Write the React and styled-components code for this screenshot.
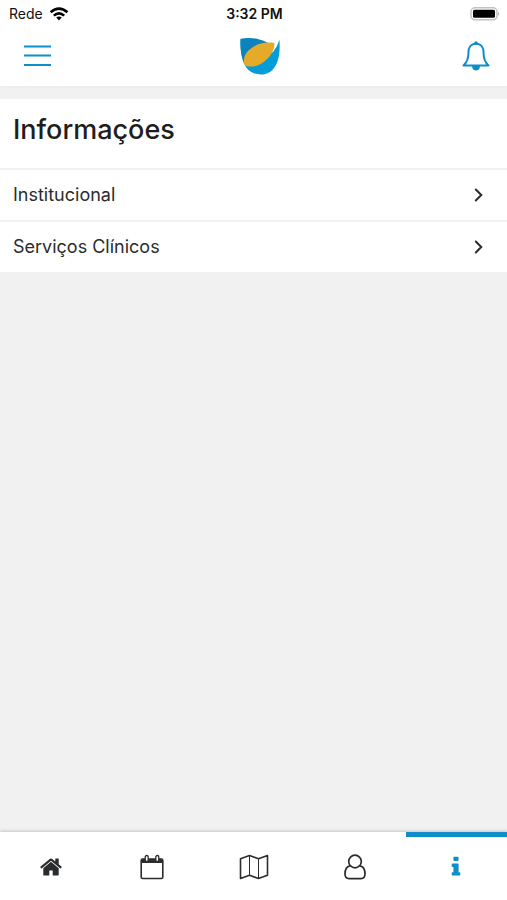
import { useState } from "react";
import styled, { createGlobalStyle } from "styled-components";

const GlobalStyle = createGlobalStyle`
  * {
    box-sizing: border-box;
  }

  body {
    margin: 0;
    background: #f1f1f1;
    color: #2b2c2e;
    font-family: Inter, "Liberation Sans", sans-serif;
  }

  button {
    padding: 0;
    border: 0;
    background: none;
    color: inherit;
    font: inherit;
    cursor: pointer;
  }

  svg {
    display: block;
  }
`;

const Screen = styled.div`
  min-height: 100vh;
  display: flex;
  flex-direction: column;
`;

const Header = styled.header`
  background: #fff;
  box-shadow: 0 1px 2px rgba(0, 0, 0, 0.04);
`;

const Bar = styled.div`
  display: grid;
  grid-template-columns: 1fr auto 1fr;
  align-items: center;
`;

const StatusBar = styled(Bar)`
  height: 28px;
  padding: 0 7px 0 9px;
  color: #111;
  font-size: 14px;
  line-height: 16px;
`;

const Toolbar = styled(Bar)`
  height: 58px;
  padding: 0 17px 2px 24px;
  color: #0f8dcb;
`;

const Network = styled.div`
  display: flex;
  align-items: center;
  gap: 6px;
`;

const Clock = styled.time`
  font-weight: 600;
`;

const End = styled.div`
  justify-self: end;
`;

const IconButton = styled.button`
  justify-self: ${(props) => (props.$end ? "end" : "start")};
`;

const Logo = styled.a`
  padding-left: 5px;
`;

const Content = styled.main`
  flex: 1;
  padding-top: 13px;
`;

const Title = styled.h1`
  margin: 0;
  padding: 15px 13px 22px;
  background: #fff;
  color: #1d1e20;
  font-size: 27px;
  font-weight: 500;
  line-height: 32px;
`;

const List = styled.ul`
  margin: 0;
  padding: 0;
  list-style: none;
`;

const Row = styled.button`
  width: 100%;
  padding: 13px 23px 13px 13px;
  display: flex;
  align-items: center;
  justify-content: space-between;
  border-top: 2px solid #f0f2f3;
  background: #fff;
  font-size: 18px;
  line-height: 24px;
  text-align: left;
`;

const TabBar = styled.nav`
  height: 68px;
  display: flex;
  background: #fff;
  box-shadow: 0 -1px 3px rgba(0, 0, 0, 0.18);
`;

const Tab = styled.button`
  flex: 1;
  padding-bottom: 4px;
  display: flex;
  align-items: center;
  justify-content: center;
  border-top: 5px solid ${(props) => (props.$active ? "#0f8dcb" : "transparent")};
  color: ${(props) => (props.$active ? "#0f8dcb" : "#2b2c2e")};
`;

const WifiIcon = () => (
  <svg width="20" height="14" viewBox="0 0 20 14" fill="none" stroke="#000" strokeWidth="2.6">
    <path d="M1.6 5.2Q10-2 18.4 5.2" />
    <path d="M4.8 8.6Q10 4 15.2 8.6" />
    <path d="M7.2 10.6Q10 8.4 12.8 10.6L10 13.6z" fill="#000" stroke="none" />
  </svg>
);

const BatteryIcon = () => (
  <svg width="30" height="14" viewBox="0 0 30 14">
    <rect x="1" y="0.8" width="26" height="12" rx="4" fill="#fff" stroke="#c2c2c2" strokeWidth="1.5" />
    <rect x="3" y="2.8" width="22" height="8" rx="1.5" fill="#000" />
    <path d="M28 4.8Q30.5 6.800 28 8.800z" fill="#b8b8b8" />
  </svg>
);

const MenuIcon = () => (
  <svg width="27" height="22" viewBox="0 0 27 22" stroke="currentColor" strokeWidth="2">
    <path d="M0 1.500h27M0 10.500h27M0 20h27" />
  </svg>
);

const LogoIcon = () => (
  <svg width="40" height="37" viewBox="0 0 40 37">
    <path d="M.6.8L20 20L33 14Q37.500 9 39.400 1.800C41 20 36 36.500 21 36.500C4 36.500 0 20 .6.800z" fill="#049dd9" />
    <path d="M.6.8Q10-1 18.500 1.200Q24 2.500 28 5L16 20L5 26Q-.5 16 .6.800z" fill="#0c83bd" />
    <path d="M34.300 5C35.500 13 27 24 18 27.300C13 29.200 8 28.800 4.800 27.500C2.500 21 4.500 15 11 10.500C18 5 26 3.800 34.300 5z" fill="#e6aa29" />
  </svg>
);

const BellIcon = () => (
  <svg width="28" height="30" viewBox="0 0 28 30" fill="none" stroke="currentColor" strokeWidth="2" strokeLinejoin="round">
    <path d="M14 2.800C8.500 2.800 6.500 7 6.500 11C6.500 18 5 21.500 1.500 24.500H26.500C23 21.500 21.500 18 21.500 11C21.500 7 19.500 2.800 14 2.800z" />
    <circle cx="14" cy="2" r="1.8" fill="currentColor" stroke="none" />
    <path d="M10 25H18C18 31 10 31 10 25z" fill="currentColor" stroke="none" />
  </svg>
);

const ChevronIcon = () => (
  <svg width="10" height="14" viewBox="0 0 10 14" fill="none" stroke="#2b2c2e" strokeWidth="2" strokeLinecap="round">
    <path d="M1.800 1.500L7.300 7L1.800 12.500" />
  </svg>
);

const HomeIcon = () => (
  <svg width="24" height="24" viewBox="0 0 1792 1792" fill="currentColor">
    <path d="M1472 992v480q0 26-19 45t-45 19h-384v-384h-256v384h-384q-26 0-45-19t-19-45v-480q0-1 .5-3t.5-3l575-474 575 474q1 2 1 6zm223-69l-62 74q-8 9-21 11h-3q-13 0-21-7l-692-577-692 577q-12 8-24 7-13-2-21-11l-62-74q-8-10-7-23.500t11-21.500l719-599q32-26 76-26t76 26l244 204v-195q0-14 9-23t23-9h192q14 0 23 9t9 23v408l219 182q10 8 11 21.500t-7 23.500z" />
  </svg>
);

const CalendarIcon = () => (
  <svg width="24" height="26" viewBox="0 0 24 26" fill="none" stroke="currentColor">
    <rect x="1.2" y="5" width="21.6" height="19.5" rx="1.5" strokeWidth="1.6" />
    <path d="M1 5h22v4H1z" fill="currentColor" stroke="none" />
    <rect x="5.2" y="1.5" width="3" height="6" rx="1.5" fill="#fff" strokeWidth="1.3" />
    <rect x="15.8" y="1.5" width="3" height="6" rx="1.5" fill="#fff" strokeWidth="1.3" />
  </svg>
);

const MapIcon = () => (
  <svg width="30" height="26" viewBox="0 0 30 26" fill="none" stroke="currentColor" strokeLinejoin="round">
    <path d="M1.500 4.800L10.500 1.500L19.500 4.800L28.500 1.500V21.200L19.500 24.500L10.500 21.200L1.500 24.500z" strokeWidth="1.6" />
    <path d="M10.500 1.500V21.200M19.500 4.800V24.500" strokeWidth="1" />
  </svg>
);

const UserIcon = () => (
  <svg width="22" height="26" viewBox="0 0 22 26" fill="none" stroke="currentColor" strokeWidth="1.7">
    <circle cx="11" cy="7.5" r="6.3" />
    <path d="M6 11.800C2.500 12.500 1 16 1 20Q1 24.600 5 24.600H17Q21 24.600 21 20C21 16 19.500 12.500 16 11.800" />
  </svg>
);

const InfoIcon = () => (
  <svg width="24" height="24" viewBox="0 0 1792 1792" fill="currentColor">
    <path d="M1216 1344v128q0 26-19 45t-45 19h-512q-26 0-45-19t-19-45v-128q0-26 19-45t45-19h64v-384h-64q-26 0-45-19t-19-45v-128q0-26 19-45t45-19h384q26 0 45 19t19 45v576h64q26 0 45 19t19 45zm-128-1152v192q0 26-19 45t-45 19h-256q-26 0-45-19t-19-45v-192q0-26 19-45t45-19h256q26 0 45 19t19 45z" />
  </svg>
);

const items = ["Institucional", "Serviços Clínicos"];

const tabs = [
  { id: "home", label: "Início", Icon: HomeIcon },
  { id: "calendar", label: "Agenda", Icon: CalendarIcon },
  { id: "map", label: "Mapa", Icon: MapIcon },
  { id: "user", label: "Perfil", Icon: UserIcon },
  { id: "info", label: "Informações", Icon: InfoIcon },
];

const App = () => {
  const [active, setActive] = useState("info");

  return (
    <Screen>
      <GlobalStyle />
      <Header>
        <StatusBar>
          <Network>
            <span>Rede</span>
            <WifiIcon />
          </Network>
          <Clock>3:32 PM</Clock>
          <End>
            <BatteryIcon />
          </End>
        </StatusBar>
        <Toolbar>
          <IconButton aria-label="Menu">
            <MenuIcon />
          </IconButton>
          <Logo href="#" aria-label="Página inicial">
            <LogoIcon />
          </Logo>
          <IconButton $end aria-label="Notificações">
            <BellIcon />
          </IconButton>
        </Toolbar>
      </Header>
      <Content>
        <Title>Informações</Title>
        <List>
          {items.map((item) => (
            <li key={item}>
              <Row>
                {item}
                <ChevronIcon />
              </Row>
            </li>
          ))}
        </List>
      </Content>
      <TabBar>
        {tabs.map(({ id, label, Icon }) => (
          <Tab
            key={id}
            aria-label={label}
            $active={active === id}
            onClick={() => setActive(id)}
          >
            <Icon />
          </Tab>
        ))}
      </TabBar>
    </Screen>
  );
};

export default App;
